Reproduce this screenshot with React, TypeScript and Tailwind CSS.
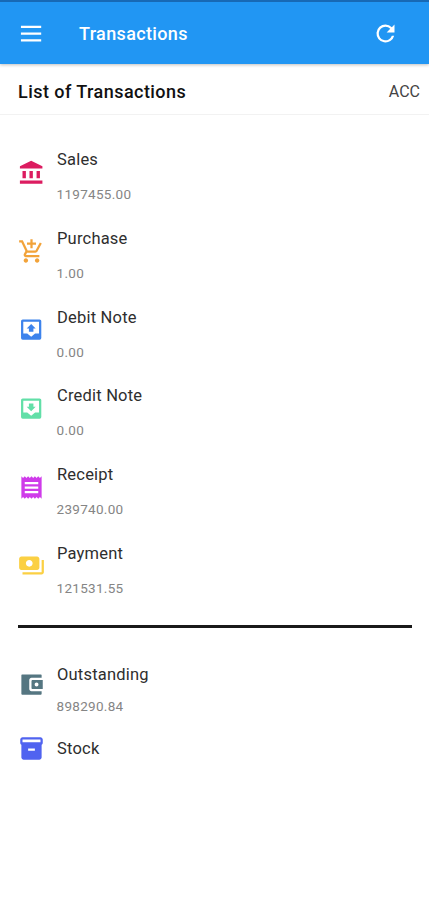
import React from "react";

function Glyph({ d, color, size = 27, className = "" }: { d: string; color: string; size?: number; className?: string }) {
  return (
    <svg viewBox="0 0 24 24" width={size} height={size} fill={color} fillRule="evenodd" className={`shrink-0 ${className}`}>
      <path d={d} />
    </svg>
  );
}

const tray = "M4.2 3h15A1.5 1.5 0 0 1 20.7 4.5v15a1.5 1.5 0 0 1-1.500 1.500h-15A1.5 1.5 0 0 1 2.7 19.500v-15A1.5 1.5 0 0 1 4.200 3zM4.700 5v10.500h3.500l3.500 3 3.500-3H18.700V5z";

const entries = [
  { name: "Sales", value: "1197455.00", color: "#dc1c60", d: "M11.7 1.5 1.7 6.5v2h20v-2zM4 10.7v6.5h3v-6.5zM10.2 10.7v6.5h3v-6.5zM16.5 10.7v6.5h3v-6.5zM1.7 19.2v2.9h20v-2.9z" },
  { name: "Purchase", value: "1.00", color: "#f2a33a", d: "M11 9h2V6h3V4h-3V1h-2v3H8v2h3v3zm-4 9c-1.1 0-1.99.9-1.99 2S5.9 22 7 22s2-.9 2-2-.9-2-2-2zm10 0c-1.1 0-1.99.9-1.99 2s.89 2 1.99 2 2-.9 2-2-.9-2-2-2zm-9.83-3.25.03-.12.9-1.63h7.45c.75 0 1.41-.41 1.75-1.03l3.86-7.01L19.42 4h-.01l-1.1 2-2.76 5H8.53l-.13-.27L6.16 6l-.95-2-.94-2H1v2h2l3.6 7.59-1.35 2.45c-.16.28-.25.61-.25.96 0 1.1.9 2 2 2h12v-2H7.42c-.13 0-.25-.11-.25-.25z" },
  { name: "Debit Note", value: "0.00", color: "#3d83ec", d: tray + "M7.7 11l4-4 4 4h-2v3h-4v-3z" },
  { name: "Credit Note", value: "0.00", color: "#62dfa8", d: tray + "M15.7 10.5h-2v-3h-4v3h-2l4 4z" },
  { name: "Receipt", value: "239740.00", color: "#cf3bea", d: "M18 17H6v-2h12v2zm0-4H6v-2h12v2zm0-4H6V7h12v2zM3 22l1.5-1.5L6 22l1.5-1.5L9 22l1.5-1.5L12 22l1.5-1.5L15 22l1.5-1.5L18 22l1.5-1.5L21 22V2l-1.5 1.5L18 2l-1.5 1.5L15 2l-1.5 1.5L12 2l-1.5 1.5L9 2 7.5 3.5 6 2 4.5 3.5 3 2z" },
  { name: "Payment", value: "121531.55", color: "#fbd043", d: "M19 14V6c0-1.1-.9-2-2-2H3c-1.1 0-2 .9-2 2v8c0 1.1.9 2 2 2h14c1.1 0 2-.9 2-2zm-9-1c-1.66 0-3-1.34-3-3s1.34-3 3-3 3 1.34 3 3-1.34 3-3 3zm13-6v11c0 1.1-.9 2-2 2H4v-2h17V7h2z" },
];
const wallet = "M10 16V8c0-1.1.89-2 2-2h9V3.5L20.5 3h-17L3 3.5v17l.5.5h17l.5-.5V18h-9c-1.11 0-2-.9-2-2zm3-8c-.55 0-1 .45-1 1v6c0 .55.45 1 1 1h9V8h-9zm3.5 5.7c-1 0-1.7-.7-1.7-1.7s.7-1.7 1.7-1.7 1.7.7 1.7 1.7-.7 1.7-1.7 1.7z";
const archive = "M20 2H4c-1 0-2 .9-2 2v3.01c0 .72.43 1.34 1 1.69V20c0 1.1 1.1 2 2 2h14c.9 0 2-.9 2-2V8.7c.57-.35 1-.97 1-1.69V4c0-1.1-1-2-2-2zm-5 12H9v-2h6v2zm5-7.5H4V4h16v2.5z";

const nameStyle = "text-[16.5px] leading-6 tracking-[0.2px] text-[#2e2e2e]";
const valueStyle = "-ml-[0.5px] text-[13.5px] leading-6 tracking-[0.3px] text-[#858585]";

export default function App() {
  return (
    <div className="h-[900px] w-full overflow-hidden bg-white font-[Roboto,sans-serif]">
      <header className="flex h-16 items-center border-t-2 border-[#1769b5] bg-[#2196f3] pr-[30px] pl-[17px] shadow-[0_1px_3px_rgba(0,0,0,0.25)]">
        <Glyph d="M3.500 5h18v2h-18zM3.500 11h18v2h-18zM3.500 17h18v2h-18z" color="#fff" size={27} />
        <h1 className="ml-[35px] flex-1 pt-px text-lg leading-6 font-medium tracking-[0.36px] text-white">Transactions</h1>
        <Glyph d="M17.65 6.35A7.958 7.958 0 0 0 12 4a8 8 0 1 0 7.73 10h-2.08A6 6 0 1 1 12 6c1.66 0 3.14.69 4.22 1.78L13 11h7V4z" color="#fff" size={27} />
      </header>
      <div className="flex h-[51px] items-center justify-between border-b border-[#f2f2f2] pt-[5px] pr-[9px] pl-[18px]">
        <h2 className="text-lg leading-6 font-medium tracking-[0.45px] text-[#111]">List of Transactions</h2>
        <span className="text-base leading-6 text-[#444]">ACC</span>
      </div>
      <ul className="pt-[33.4px]">
        {entries.map((e) => (
          <li key={e.name} className="flex h-[78.7px] pl-[18px]">
            <Glyph d={e.d} color={e.color} className="mt-[10.6px]" />
            <div className="ml-3">
              <div className={nameStyle}>{e.name}</div>
              <div className={`mt-[10px] ${valueStyle}`}>{e.value}</div>
            </div>
          </li>
        ))}
      </ul>
      <div className="mt-[4.6px] mr-[17px] ml-[18px] h-[3px] bg-[#191919]" />
      <section className="pt-[35px] pl-[18px]">
        <div className="flex h-[73px]">
          <Glyph d={wallet} color="#557681" className="mt-2" />
          <div className="ml-3">
            <div className={nameStyle}>Outstanding</div>
            <div className={`mt-[7px] ${valueStyle}`}>898290.84</div>
          </div>
        </div>
        <div className="flex">
          <Glyph d={archive} color="#5063f0" className="-mt-px" />
          <div className={`ml-3 pt-px ${nameStyle}`}>Stock</div>
        </div>
      </section>
    </div>
  );
}
